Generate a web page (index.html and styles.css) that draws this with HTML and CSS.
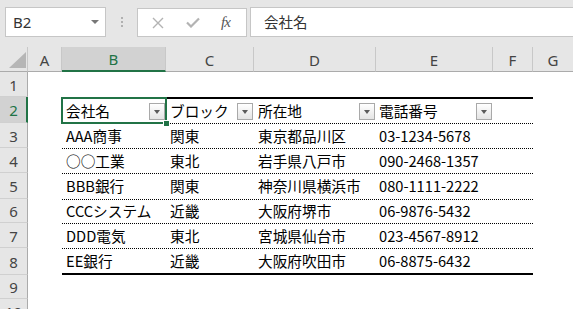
FILE: index.html
```html
<html lang="ja">

<head>
    <meta charset="UTF-8">
    <title>Sheet</title>
    <link rel="stylesheet" href="styles.css">
</head>

<body>

    <div class="toolbar">
        <div class="namebox">
            <span>B2</span>
            <span class="nb-arrow"></span>
        </div>
        <div class="grip"><i></i><i></i><i></i></div>
        <div class="fbtns">
            <svg width="12" height="12" viewBox="0 0 12 12">
                <path d="M1 1 L11 11 M11 1 L1 11" stroke="#b3b3b3" stroke-width="1.4" fill="none" />
            </svg>
            <svg width="14" height="11" viewBox="0 0 14 11">
                <path d="M1 5.5 L5 9.5 L13 1.5" stroke="#b3b3b3" stroke-width="2.2" fill="none" />
            </svg>
            <span class="fx">fx</span>
        </div>
        <div class="finput">会社名</div>
    </div>

    <div class="colhead">
        <div class="corner">
            <svg width="27" height="24" viewBox="0 0 27 24">
                <polygon points="26,5 26,21 9,21" fill="#b6b6b6" />
            </svg>
        </div>
        <div class="ch a">A</div>
        <div class="ch b on">B</div>
        <div class="ch c">C</div>
        <div class="ch d">D</div>
        <div class="ch e">E</div>
        <div class="ch f">F</div>
        <div class="ch g">G</div>
    </div>

    <div class="row h25">
        <div class="rh">1</div>
    </div>

    <div class="row h26">
        <div class="rh on">2</div>
        <div class="cell a"></div>
        <div class="tbl first">
            <div class="cell b sel-cell">
                <span>会社名</span><span class="dd"></span>
                <div class="sel"><i></i></div>
            </div>
            <div class="cell c"><span>ブロック</span><span class="dd"></span></div>
            <div class="cell d"><span>所在地</span><span class="dd"></span></div>
            <div class="cell e"><span>電話番号</span><span class="dd"></span></div>
            <div class="cell f"></div>
        </div>
    </div>

    <div class="row h25">
        <div class="rh">3</div>
        <div class="cell a"></div>
        <div class="tbl">
            <div class="cell b">AAA商事</div>
            <div class="cell c">関東</div>
            <div class="cell d">東京都品川区</div>
            <div class="cell e">03-1234-5678</div>
            <div class="cell f"></div>
        </div>
    </div>

    <div class="row h25">
        <div class="rh">4</div>
        <div class="cell a"></div>
        <div class="tbl">
            <div class="cell b">○○工業</div>
            <div class="cell c">東北</div>
            <div class="cell d">岩手県八戸市</div>
            <div class="cell e">090-2468-1357</div>
            <div class="cell f"></div>
        </div>
    </div>

    <div class="row h26">
        <div class="rh">5</div>
        <div class="cell a"></div>
        <div class="tbl">
            <div class="cell b">BBB銀行</div>
            <div class="cell c">関東</div>
            <div class="cell d">神奈川県横浜市</div>
            <div class="cell e">080-1111-2222</div>
            <div class="cell f"></div>
        </div>
    </div>

    <div class="row h24">
        <div class="rh">6</div>
        <div class="cell a"></div>
        <div class="tbl">
            <div class="cell b">CCCシステム</div>
            <div class="cell c">近畿</div>
            <div class="cell d">大阪府堺市</div>
            <div class="cell e">06-9876-5432</div>
            <div class="cell f"></div>
        </div>
    </div>

    <div class="row h25">
        <div class="rh">7</div>
        <div class="cell a"></div>
        <div class="tbl">
            <div class="cell b">DDD電気</div>
            <div class="cell c">東北</div>
            <div class="cell d">宮城県仙台市</div>
            <div class="cell e">023-4567-8912</div>
            <div class="cell f"></div>
        </div>
    </div>

    <div class="row h27">
        <div class="rh">8</div>
        <div class="cell a"></div>
        <div class="tbl last">
            <div class="cell b">EE銀行</div>
            <div class="cell c">近畿</div>
            <div class="cell d">大阪府吹田市</div>
            <div class="cell e">06-8875-6432</div>
            <div class="cell f"></div>
        </div>
    </div>

    <div class="row h24">
        <div class="rh">9</div>
    </div>

    <div class="row h25">
        <div class="rh">10</div>
    </div>

</body>

</html>
```

FILE: styles.css
```css
body {
    margin: 0;
    padding: 0;
    width: 573px;
    height: 309px;
    overflow: hidden;
    background: #fff;
    font-family: "Noto Sans CJK JP", sans-serif;
}

/* formula bar */
.toolbar {
    height: 47px;
    background: #e6e6e6;
    display: flex;
    align-items: flex-start;
    box-sizing: border-box;
    padding-top: 7px;
    padding-left: 5px;
}
.namebox {
    width: 101px;
    height: 30px;
    box-sizing: border-box;
    border: 1px solid #c6c6c6;
    background: #fff;
    display: flex;
    align-items: center;
    padding-left: 7px;
    padding-right: 6px;
    font-family: "Noto Sans", sans-serif;
    font-size: 15px;
    color: #333;
}
.nb-arrow {
    margin-left: auto;
    width: 0;
    height: 0;
    border-left: 4px solid transparent;
    border-right: 4px solid transparent;
    border-top: 4px solid #777;
}
.grip {
    width: 31px;
    height: 30px;
    display: flex;
    flex-direction: column;
    align-items: center;
    justify-content: center;
    gap: 2px;
}
.grip i {
    display: block;
    width: 2px;
    height: 2px;
    background: #b0b0b0;
}
.fbtns {
    width: 110px;
    height: 29px;
    margin-top: 1px;
    box-sizing: border-box;
    border: 1px solid #c6c6c6;
    background: #fff;
    display: flex;
    align-items: center;
    padding-left: 14px;
}
.fbtns svg:first-child {
    margin-right: 22px;
}
.fbtns svg:nth-child(2) {
    margin-right: 21px;
}
.fx {
    font-family: "Liberation Serif", serif;
    font-style: italic;
    font-size: 15px;
    color: #555;
    letter-spacing: -1px;
}
.finput {
    margin-left: 3px;
    flex: 1;
    height: 30px;
    box-sizing: border-box;
    border: 1px solid #c6c6c6;
    border-right: 0;
    background: #fff;
    display: flex;
    align-items: center;
    padding-left: 13px;
    font-size: 14.5px;
    color: #333;
    line-height: 1;
}

/* column header */
.colhead {
    display: flex;
    height: 25px;
    background: #e6e6e6;
}
.corner {
    width: 28px;
    height: 25px;
    box-sizing: border-box;
    border-right: 1px solid #c8c8c8;
    border-bottom: 1px solid #ababab;
}
.corner svg {
    display: block;
}
.ch {
    height: 25px;
    box-sizing: border-box;
    border-right: 1px solid #c8c8c8;
    border-bottom: 1px solid #ababab;
    display: flex;
    align-items: center;
    justify-content: center;
    font-family: "Noto Sans", sans-serif;
    font-size: 15px;
    color: #444;
    padding-top: 1px;
}
.ch.on {
    background: #d2d2d2;
    color: #217346;
    border-bottom: 2px solid #217346;
}
.ch.g {
    flex: 1;
    border-right: 0;
}

.a { width: 34px; }
.b { width: 104px; }
.c { width: 88px; }
.d { width: 122px; }
.e { width: 117px; }
.f { width: 40px; }
.g { width: 40px; }

/* rows */
.row {
    display: flex;
}
.h24 { height: 24px; }
.h25 { height: 25px; }
.h26 { height: 26px; }
.h27 { height: 27px; }

.rh {
    width: 28px;
    flex: none;
    box-sizing: border-box;
    background: #e6e6e6;
    border-right: 1px solid #ababab;
    border-bottom: 1px solid #d0d0d0;
    display: flex;
    align-items: center;
    justify-content: center;
    font-family: "Noto Sans", sans-serif;
    font-size: 15px;
    color: #444;
    padding-top: 1px;
}
.rh.on {
    background: #d2d2d2;
    color: #217346;
    border-right: 2px solid #217346;
    padding-left: 1px;
}

.tbl {
    display: flex;
    box-sizing: border-box;
    border-top: 1px dotted #000;
}
.tbl.first {
    border-top: 2px solid #000;
}
.tbl.last {
    border-bottom: 2px solid #000;
}

.cell {
    flex: none;
    box-sizing: border-box;
    display: flex;
    align-items: center;
    padding-left: 4px;
    font-size: 14.67px;
    line-height: 1;
    color: #000;
    white-space: nowrap;
}
.cell.e {
    padding-left: 3px;
}

.dd {
    margin-left: auto;
    margin-right: 1px;
    align-self: flex-end;
    margin-bottom: 3px;
    width: 16px;
    height: 17px;
    box-sizing: border-box;
    border: 1px solid #a9a9a9;
    background: linear-gradient(#ffffff, #e4e4e4);
    display: flex;
    align-items: center;
    justify-content: center;
}
.dd::after {
    content: "";
    width: 0;
    height: 0;
    border-left: 3.5px solid transparent;
    border-right: 3.5px solid transparent;
    border-top: 4px solid #5a5a5a;
}

/* selected cell */
.sel-cell {
    position: relative;
}
.sel {
    position: absolute;
    top: -2px;
    left: -1px;
    right: -1px;
    bottom: -1px;
    border: 2px solid #217346;
}
.sel i {
    position: absolute;
    right: -5px;
    bottom: -5px;
    width: 5px;
    height: 5px;
    background: #217346;
    border: 1px solid #fff;
}
```
